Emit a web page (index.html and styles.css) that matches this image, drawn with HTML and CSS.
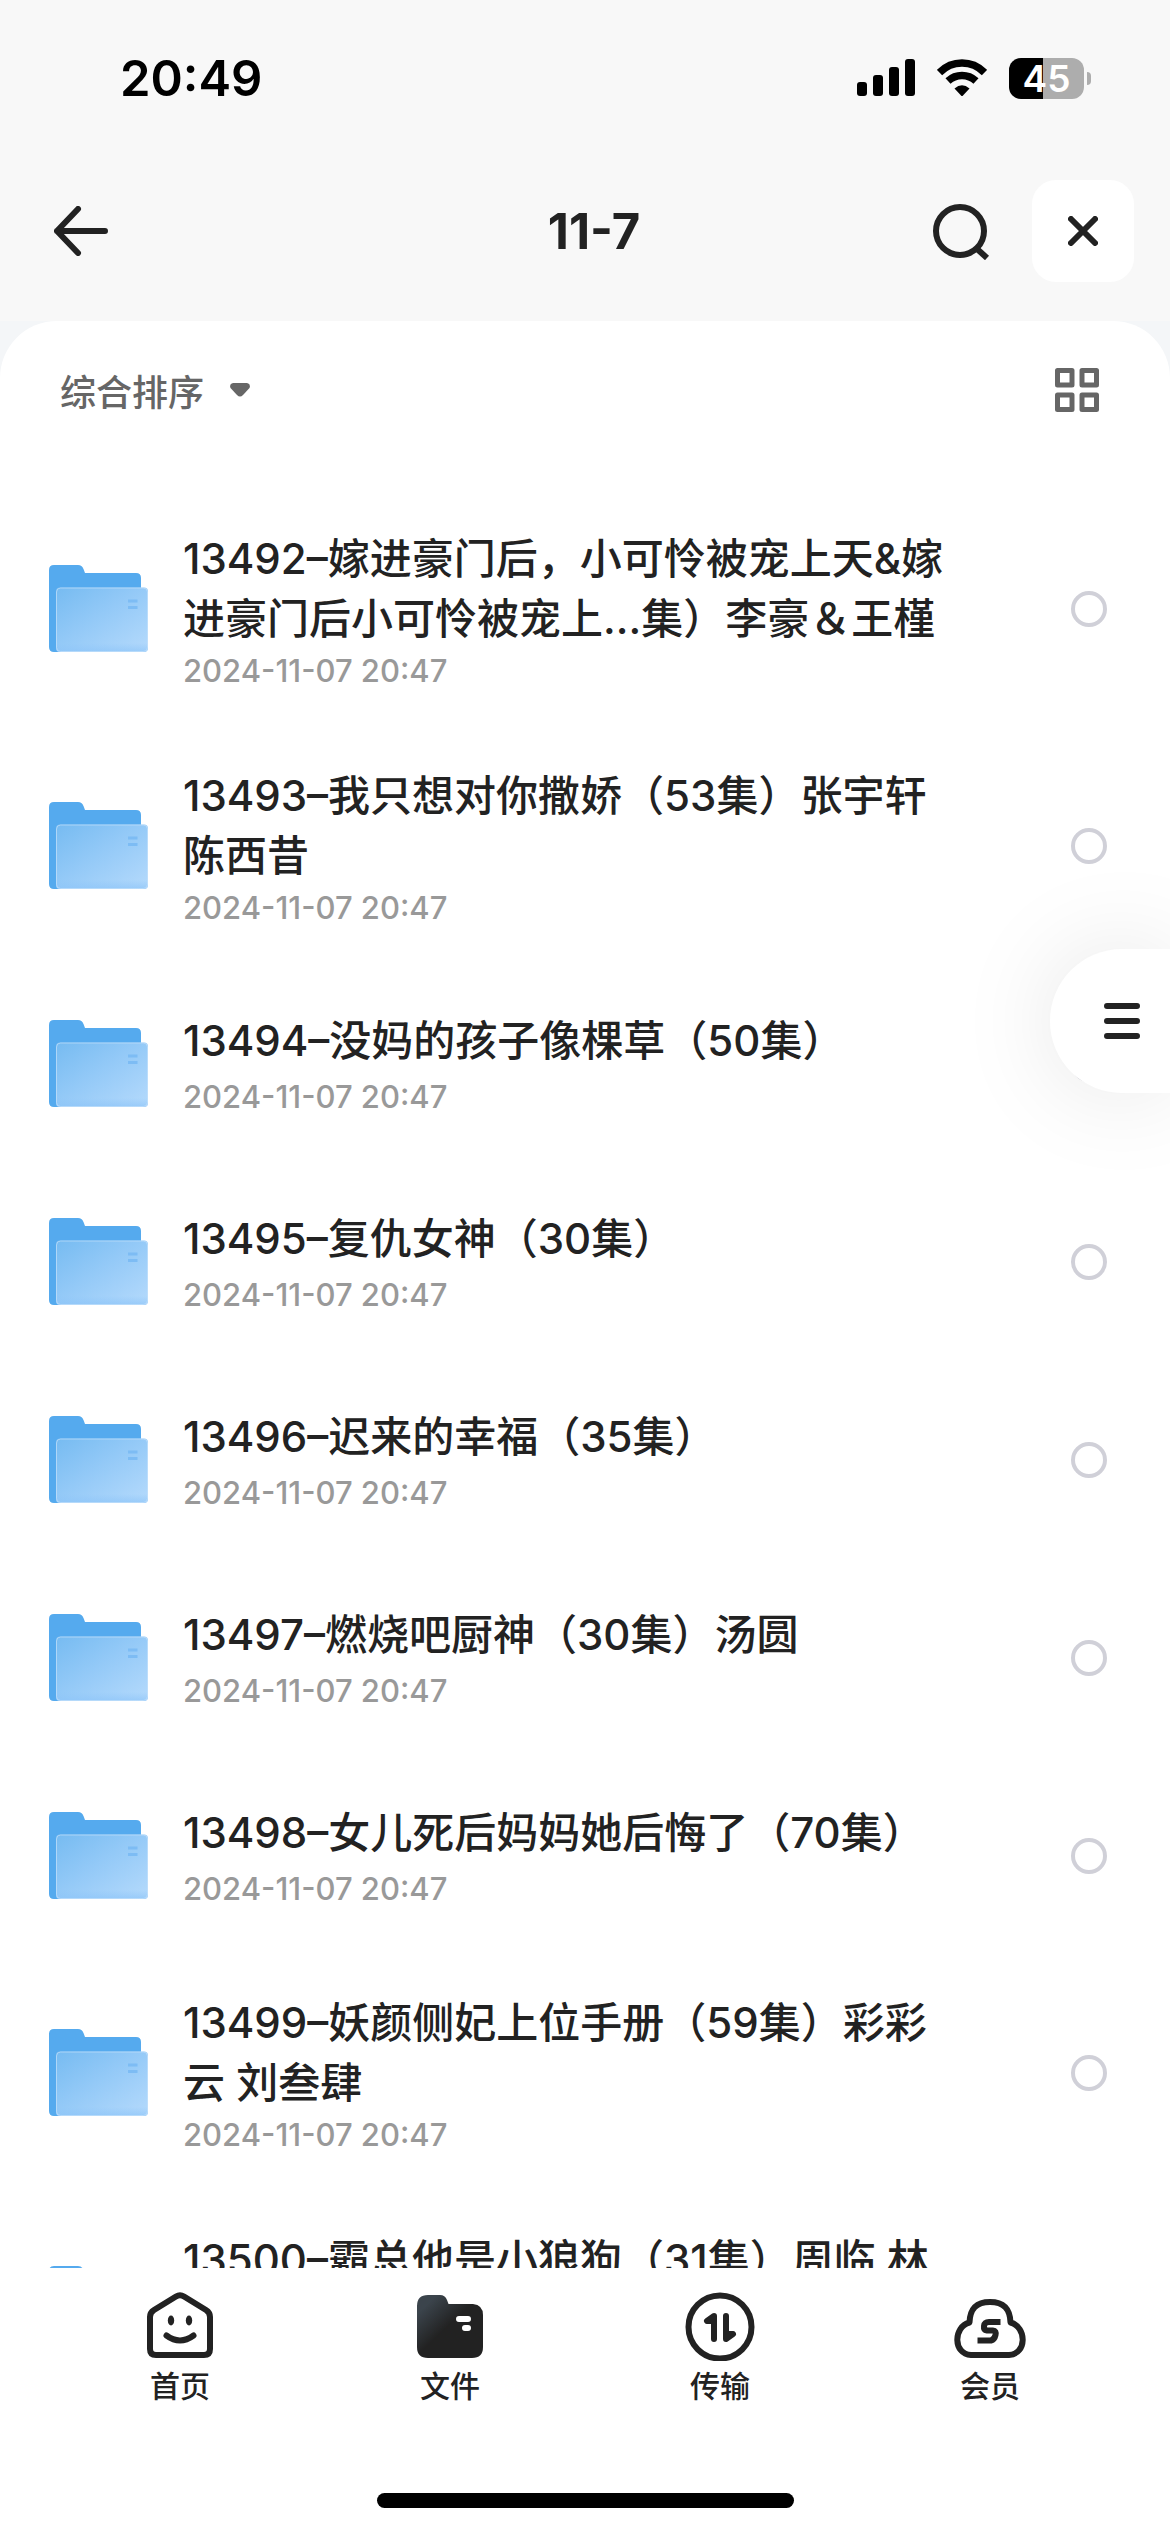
FILE: index.html
```html
<!DOCTYPE html>
<html lang="zh-CN">
<head>
<meta charset="utf-8">
<meta name="viewport" content="width=device-width">
<title>11-7</title>
<link rel="stylesheet" href="styles.css">
</head>
<body>
<svg class="sprite" aria-hidden="true">
  <defs>
    <linearGradient id="folder-front" x1="0" y1="0" x2="1" y2="1">
      <stop offset="0" stop-color="#76bbf1"/>
      <stop offset="0.45" stop-color="#93c9f7"/>
      <stop offset="1" stop-color="#b5dafc"/>
    </linearGradient>
    <linearGradient id="folder-base" x1="0" y1="0" x2="0" y2="1">
      <stop offset="0.86" stop-color="#8cc4f8" stop-opacity="0"/>
      <stop offset="1" stop-color="#8cc4f8" stop-opacity="0.7"/>
    </linearGradient>
    <linearGradient id="tab-folder" x1="0" y1="0" x2="0.6" y2="0.6">
      <stop offset="0.25" stop-color="#3b444c"/>
      <stop offset="0.8" stop-color="#222"/>
    </linearGradient>
    <symbol id="folder" viewBox="0 0 100 88">
      <path fill="#55aaee" d="M5 0H29Q33 0 34.500 4L36 8H87Q92 8 92 13V80L12 87H5Q0 87 0 82V5Q0 0 5 0Z"/>
      <rect x="7" y="22.500" width="92" height="64.500" rx="4" fill="url(#folder-front)"/>
      <rect x="7" y="22.500" width="92" height="64.500" rx="4" fill="url(#folder-base)"/>
      <rect x="7.500" y="23" width="91" height="63.500" rx="4" fill="none" stroke="#c4e1fb" stroke-opacity="0.7"/>
      <path stroke="#7dbcf4" stroke-width="3" d="M79 36H88.500M79 42.500H88.500"/>
    </symbol>
  </defs>
</svg>

<div class="app">
  <div class="status">
    <time class="status-time">20:49</time>
    <div class="status-icons">
      <svg width="58" height="38" viewBox="0 0 58 38" aria-hidden="true">
        <rect x="0" y="23" width="10" height="14" rx="3"/>
        <rect x="16" y="16" width="10" height="21" rx="3"/>
        <rect x="32" y="8" width="10" height="29" rx="3"/>
        <rect x="48" y="0" width="10" height="37" rx="3"/>
      </svg>
      <svg width="50" height="38" viewBox="0 0 50 38" aria-hidden="true">
        <path fill="none" stroke="#000" stroke-width="7.500" d="M2.500 13.500Q12 4 25 4T47.500 13.500M11 22Q17 16.500 25 16.500T39 22"/>
        <path d="M17.500 29.500Q25 23 32.500 29.500L26 36.500Q25 37.500 24 36.500Z"/>
      </svg>
      <div class="battery"><span class="battery-body">45</span><span class="battery-tip"></span></div>
    </div>
  </div>

  <header class="topbar">
    <button class="icon-btn" aria-label="返回">
      <svg width="54" height="50" viewBox="0 0 54 50"><path class="line" d="M51 25H3M24 3L3 25L24 47"/></svg>
    </button>
    <h1 class="title">11-7</h1>
    <div class="actions">
      <button class="icon-btn" aria-label="搜索">
        <svg width="58" height="58" viewBox="0 0 58 58"><circle class="line" cx="28" cy="29" r="24"/><path class="line flat" d="M44 46L55 56"/></svg>
      </button>
      <button class="icon-btn close" aria-label="关闭">
        <svg width="30" height="30" viewBox="0 0 30 30"><path class="line" d="M3 3L27 27M27 3L3 27"/></svg>
      </button>
    </div>
  </header>

  <main class="panel">
    <div class="toolbar">
      <button class="sort">综合排序
        <svg width="20" height="14" viewBox="0 0 20 14" aria-hidden="true"><path fill="#666" d="M3 0H17Q21 1 19.500 5L13 12Q10 15 7 12L0.500 5Q-1 1 3 0Z"/></svg>
      </button>
      <button class="icon-btn" aria-label="网格视图">
        <svg width="44" height="44" viewBox="0 0 44 44"><path fill="none" stroke="#666" stroke-width="5" stroke-linejoin="round" d="M2.500 2.500H17V17H2.500ZM27 2.500H41.500V17H27ZM2.500 27H17V41.500H2.500ZM27 27H41.500V41.500H27Z"/></svg>
      </button>
    </div>

    <ul class="files">
      <li class="file tall">
        <svg class="folder" aria-hidden="true"><use href="#folder"/></svg>
        <div class="info"><label class="name" for="f1">13492–嫁进豪门后，小可怜被宠上天&amp;嫁进豪门后小可怜被宠上...集）李豪＆王槿</label><time class="date">2024-11-07 20:47</time></div>
        <input class="pick" type="checkbox" id="f1">
      </li>
      <li class="file tall">
        <svg class="folder" aria-hidden="true"><use href="#folder"/></svg>
        <div class="info"><label class="name" for="f2">13493–我只想对你撒娇（53集）张宇轩 陈西昔</label><time class="date">2024-11-07 20:47</time></div>
        <input class="pick" type="checkbox" id="f2">
      </li>
      <li class="file">
        <svg class="folder" aria-hidden="true"><use href="#folder"/></svg>
        <div class="info"><label class="name" for="f3">13494–没妈的孩子像棵草（50集）</label><time class="date">2024-11-07 20:47</time></div>
        <input class="pick" type="checkbox" id="f3">
      </li>
      <li class="file">
        <svg class="folder" aria-hidden="true"><use href="#folder"/></svg>
        <div class="info"><label class="name" for="f4">13495–复仇女神（30集）</label><time class="date">2024-11-07 20:47</time></div>
        <input class="pick" type="checkbox" id="f4">
      </li>
      <li class="file">
        <svg class="folder" aria-hidden="true"><use href="#folder"/></svg>
        <div class="info"><label class="name" for="f5">13496–迟来的幸福（35集）</label><time class="date">2024-11-07 20:47</time></div>
        <input class="pick" type="checkbox" id="f5">
      </li>
      <li class="file">
        <svg class="folder" aria-hidden="true"><use href="#folder"/></svg>
        <div class="info"><label class="name" for="f6">13497–燃烧吧厨神（30集）汤圆</label><time class="date">2024-11-07 20:47</time></div>
        <input class="pick" type="checkbox" id="f6">
      </li>
      <li class="file">
        <svg class="folder" aria-hidden="true"><use href="#folder"/></svg>
        <div class="info"><label class="name" for="f7">13498–女儿死后妈妈她后悔了（70集）</label><time class="date">2024-11-07 20:47</time></div>
        <input class="pick" type="checkbox" id="f7">
      </li>
      <li class="file tall">
        <svg class="folder" aria-hidden="true"><use href="#folder"/></svg>
        <div class="info"><label class="name" for="f8">13499–妖颜侧妃上位手册（59集）彩彩云 刘叁肆</label><time class="date">2024-11-07 20:47</time></div>
        <input class="pick" type="checkbox" id="f8">
      </li>
      <li class="file tall last">
        <svg class="folder" aria-hidden="true"><use href="#folder"/></svg>
        <div class="info"><label class="name" for="f9">13500–霸总他是小狼狗（31集）周临 林</label></div>
        <input class="pick" type="checkbox" id="f9">
      </li>
    </ul>
  </main>

  <nav class="tabs">
    <a class="tab" href="#home">
      <svg width="72" height="72" viewBox="0 0 72 72" aria-hidden="true">
        <path class="line" d="M32 7.500Q36 5 40 7.500L62 21Q66 23.500 66 28V60Q66 66 60 66H12Q6 66 6 60V28Q6 23.500 10 21Z"/>
        <path class="line" d="M22.500 46.500Q36 56.500 49.500 46.500"/>
        <ellipse cx="27" cy="31.500" rx="3.200" ry="5" fill="#222"/><ellipse cx="45" cy="31.500" rx="3.200" ry="5" fill="#222"/>
      </svg>
      <span>首页</span>
    </a>
    <a class="tab" href="#files" aria-current="page">
      <svg width="72" height="72" viewBox="0 0 72 72" aria-hidden="true">
        <path fill="url(#tab-folder)" d="M14 6H26Q31 6 33 11L34.500 15H59Q69 16 69 26V58Q69 69 58 69H14Q3 69 3 58V17Q3 6 14 6Z"/>
        <path stroke="#fff" stroke-width="6" stroke-linecap="round" d="M45 30H54M51 39H54"/>
      </svg>
      <span>文件</span>
    </a>
    <a class="tab" href="#transfer">
      <svg width="72" height="72" viewBox="0 0 72 72" aria-hidden="true">
        <circle class="line" cx="36" cy="38" r="31.500"/>
        <path class="line" d="M30 50V27L23 32H30M42 27V50L49 45H42"/>
      </svg>
      <span>传输</span>
    </a>
    <a class="tab" href="#member">
      <svg width="72" height="72" viewBox="0 0 72 72" aria-hidden="true">
        <path class="line" d="M17 66C-1 65 -1 38 15.500 33.500C16 20 22 13 36 13S56 20 56.500 33.500C73 38 73 65 55 66Z"/>
        <path fill="none" stroke="#222" stroke-width="6" stroke-linejoin="round" d="M46.500 33H35Q30.500 33 30 37T33 41.500H39Q42.500 41.500 41.500 46T37 51.500H23.500"/>
      </svg>
      <span>会员</span>
    </a>
  </nav>
  <div class="home-area"><div class="home-indicator"></div></div>
</div>

<button class="float-menu" aria-label="菜单">
  <svg width="36" height="36" viewBox="0 0 36 36"><path class="line" d="M3 3H33M3 18H33M3 33H33"/></svg>
</button>
</body>
</html>
```
FILE: styles.css
```css
* { box-sizing: border-box; }

body {
  margin: 0;
  background: #fff;
  color: #222;
  font-family: Inter, "Noto Sans CJK SC", sans-serif;
  font-size: 42px;
  font-weight: 500;
}

button {
  display: flex;
  align-items: center;
  padding: 0;
  border: 0;
  background: none;
  color: inherit;
  font: inherit;
}

svg { display: block; flex: none; }

.sprite { position: absolute; width: 0; height: 0; }

.line {
  fill: none;
  stroke: #222;
  stroke-width: 6;
  stroke-linecap: round;
  stroke-linejoin: round;
}
.flat { stroke-linecap: butt; }

.app {
  display: flex;
  flex-direction: column;
  height: 100vh;
  background: linear-gradient(#f8f8f8 321px, #f4f6f8 321px);
}

.status {
  display: flex;
  align-items: center;
  justify-content: space-between;
  height: 156px;
  padding: 0 79px 0 120px;
  color: #000;
}
.status-time { font-size: 49px; font-weight: 600; }
.status-icons { display: flex; align-items: center; gap: 22px; }

.battery { display: flex; align-items: center; gap: 3px; }
.battery-body {
  width: 75px;
  height: 41px;
  border-radius: 12px;
  background: linear-gradient(90deg, #000 34px, #adadad 34px);
  color: #fff;
  font-size: 37px;
  font-weight: 600;
  line-height: 41px;
  text-align: center;
}
.battery-tip { width: 4px; height: 13px; border-radius: 0 4px 4px 0; background: #adadad; }

.topbar {
  display: grid;
  grid-template-columns: 1fr auto 1fr;
  align-items: center;
  height: 165px;
  padding: 0 36px 15px 54px;
}
.title { margin: 0; font-size: 49px; font-weight: 700; }
.actions { display: flex; align-items: center; justify-content: flex-end; gap: 42px; }
.close {
  justify-content: center;
  width: 102px;
  height: 102px;
  border-radius: 24px;
  background: #fff;
}

.panel {
  flex: 1;
  min-height: 0;
  overflow: hidden;
  border-radius: 57px 57px 0 0;
  background: #fff;
}

.toolbar {
  display: flex;
  align-items: center;
  justify-content: space-between;
  height: 170px;
  padding: 0 71px 32px 60px;
}
.sort { gap: 26px; color: #666; font-size: 36px; }

.files { margin: 0; padding: 0; list-style: none; }
.file {
  display: flex;
  align-items: center;
  padding: 44px 63px 44px 49px;
}
.tall { padding-top: 34px; padding-bottom: 35px; }
.folder { width: 100px; height: 88px; }
.info {
  display: flex;
  flex: 1;
  flex-direction: column;
  gap: 4px;
  margin: 0 117px 0 34px;
  padding-top: 2px;
}
.tall .info { gap: 0; padding-top: 4px; }
.name { line-height: 60px; }
.date { color: #999; font-size: 31px; line-height: 44px; }
.last { align-items: flex-start; }
.last .folder { margin-top: 40px; }
.pick {
  appearance: none;
  width: 36px;
  height: 36px;
  margin: 0;
  border: 4px solid #d0d0d8;
  border-radius: 50%;
}
.last .pick { margin-top: 66px; }

.tabs {
  display: grid;
  grid-template-columns: repeat(4, 1fr);
  height: 225px;
  padding: 21px 45px 0;
  background: #fff;
}
.tab {
  display: flex;
  flex-direction: column;
  align-items: center;
  gap: 5px;
  color: #222;
  font-size: 30px;
  line-height: 40px;
  text-decoration: none;
}

.home-area {
  display: flex;
  justify-content: center;
  height: 39px;
  background: #fff;
}
.home-indicator {
  width: 417px;
  height: 15px;
  border-radius: 8px;
  background: #000;
}

.float-menu {
  position: fixed;
  top: 949px;
  right: 0;
  width: 120px;
  height: 144px;
  padding-left: 54px;
  border-radius: 72px 0 0 72px;
  background: #fff;
  box-shadow: 0 0 100px rgba(0, 0, 0, 0.1);
}
```
